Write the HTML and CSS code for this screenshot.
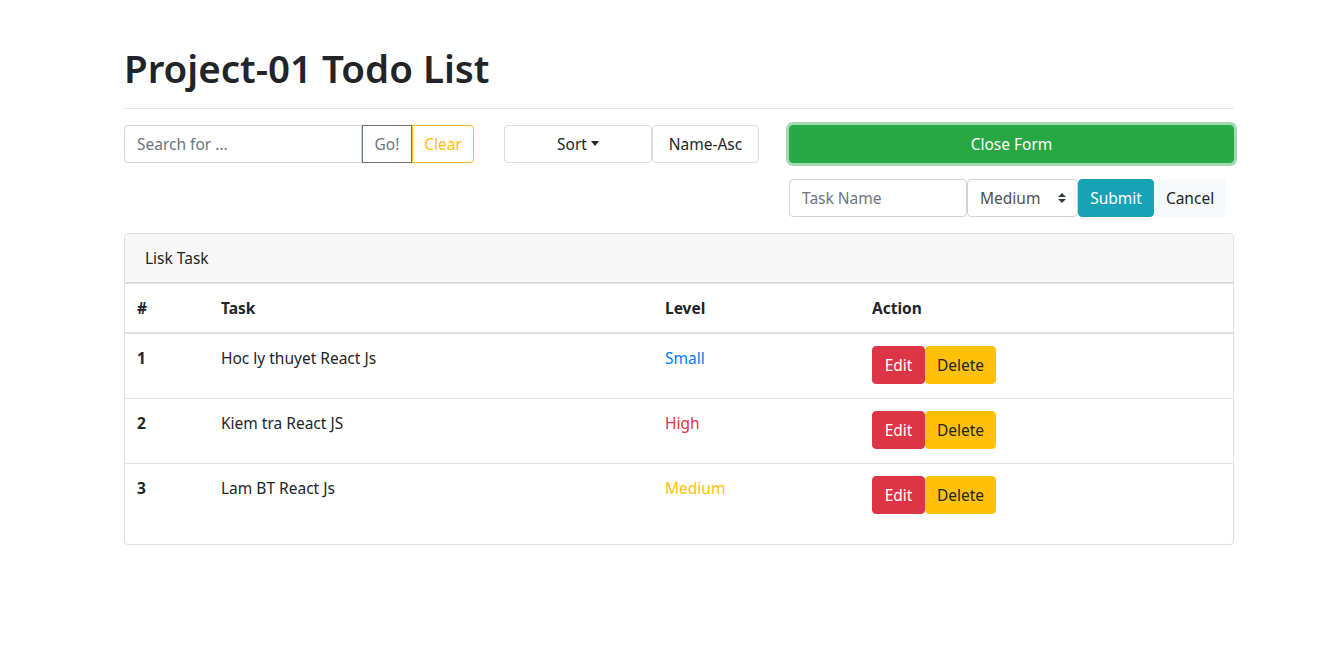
FILE: index.html
```html
<!DOCTYPE html>
<html lang="en">
<head>
<meta charset="utf-8">
<title>Project-01 Todo List</title>
<link rel="stylesheet" href="styles.css">
</head>
<body>
<div class="container">
  <div class="page-header">
    <h1 class="title">Project-01 Todo List</h1>
  </div>

  <div class="toolbar">
    <div class="search-group">
      <input class="search-input" type="text" placeholder="Search for ...">
      <button class="btn btn-outline-secondary btn-go">Go!</button>
      <button class="btn btn-outline-warning btn-clear">Clear</button>
    </div>

    <div class="sort-group">
      <button class="btn btn-outline-light btn-sort">Sort<span class="caret"></span></button>
      <span class="btn btn-outline-light btn-sort-label">Name-Asc</span>
    </div>

    <div class="form-col">
      <button class="btn btn-success btn-close-form">Close Form</button>
      <form class="task-form">
        <input class="task-input" type="text" placeholder="Task Name">
        <div class="select-wrap">
          <select class="level-select">
            <option>Small</option>
            <option selected>Medium</option>
            <option>High</option>
          </select>
          <svg class="select-arrows" width="8" height="10" viewBox="0 0 4 5"><path d="M2 0L0 2h4zm0 5L0 3h4z" fill="#343a40"/></svg>
        </div>
        <button type="button" class="btn btn-info btn-submit">Submit</button>
        <button type="button" class="btn btn-light btn-cancel">Cancel</button>
      </form>
    </div>
  </div>

  <div class="card">
    <div class="card-header">Lisk Task</div>
    <table class="task-table">
      <colgroup>
        <col class="c-num"><col class="c-task"><col class="c-level"><col class="c-action">
      </colgroup>
      <thead>
        <tr><th>#</th><th>Task</th><th>Level</th><th>Action</th></tr>
      </thead>
      <tbody>
        <tr>
          <td class="num">1</td>
          <td>Hoc ly thuyet React Js</td>
          <td class="lvl-small">Small</td>
          <td><div class="actions"><button class="btn btn-danger btn-edit">Edit</button><button class="btn btn-warning btn-delete">Delete</button></div></td>
        </tr>
        <tr>
          <td class="num">2</td>
          <td>Kiem tra React JS</td>
          <td class="lvl-high">High</td>
          <td><div class="actions"><button class="btn btn-danger btn-edit">Edit</button><button class="btn btn-warning btn-delete">Delete</button></div></td>
        </tr>
        <tr>
          <td class="num">3</td>
          <td>Lam BT React Js</td>
          <td class="lvl-medium">Medium</td>
          <td><div class="actions"><button class="btn btn-danger btn-edit">Edit</button><button class="btn btn-warning btn-delete">Delete</button></div></td>
        </tr>
      </tbody>
    </table>
  </div>
</div>
</body>
</html>
```
FILE: styles.css
```css
* { box-sizing: border-box; }

body {
  margin: 0;
  background: #fff;
  color: #212529;
  font-family: "Segoe UI", "Noto Sans", "Open Sans", sans-serif;
  font-size: 15.5px;
  line-height: 24px;
}

.container {
  width: 1110px;
  margin-left: 124px;
  padding-top: 44px;
}

.page-header {
  border-bottom: 1px solid #e5e5e5;
  padding-bottom: 16px;
  margin-bottom: 16px;
}

.title {
  margin: 0;
  font-size: 38.5px;
  line-height: 48px;
  font-weight: 600;
  color: #212529;
}

.toolbar {
  display: grid;
  grid-template-columns: 350px 255px 445px;
  column-gap: 30px;
  align-items: start;
  margin-bottom: 16px;
}

.btn {
  display: inline-flex;
  align-items: center;
  justify-content: center;
  height: 38px;
  padding: 0 12px;
  font-family: inherit;
  font-size: 15.5px;
  line-height: 24px;
  border: 1px solid transparent;
  border-radius: 4px;
  background: transparent;
  color: #212529;
  cursor: pointer;
}

/* search */
.search-group {
  display: flex;
  height: 38px;
}
.search-input {
  width: 238px;
  height: 38px;
  padding: 0 12px;
  font-family: inherit;
  font-size: 15.5px;
  color: #495057;
  border: 1px solid #ced4da;
  border-radius: 4px 0 0 4px;
  outline: none;
}
.search-input::placeholder, .task-input::placeholder { color: #6c757d; }

.btn-outline-secondary {
  color: #6c757d;
  border-color: #6c757d;
}
.btn-go {
  width: 50px;
  border-radius: 0;
}
.btn-outline-warning {
  color: #ffc107;
  border-color: #ffc107;
}
.btn-clear {
  width: 62px;
  border-radius: 0 4px 4px 0;
}

/* sort */
.sort-group {
  display: flex;
}
.btn-outline-light {
  border-color: #dadee2;
  background: #fff;
  color: #212529;
}
.btn-sort { width: 148px; }
.btn-sort-label { width: 107px; }
.caret {
  display: inline-block;
  margin-left: 4px;
  margin-top: -2px;
  border-top: 5px solid #212529;
  border-left: 4.5px solid transparent;
  border-right: 4.5px solid transparent;
}

/* form */
.btn-success {
  width: 100%;
  background: #28a745;
  border-color: #28a745;
  color: #fff;
  box-shadow: 0 0 0 3px rgba(72, 180, 97, 0.5);
}
.task-form {
  display: flex;
  margin-top: 16px;
  height: 38px;
}
.task-input {
  width: 178px;
  height: 38px;
  padding: 0 12px;
  font-family: inherit;
  font-size: 15.5px;
  color: #495057;
  border: 1px solid #ced4da;
  border-radius: 4px;
  outline: none;
}
.select-wrap {
  position: relative;
  width: 111px;
  height: 38px;
}
.level-select {
  width: 100%;
  height: 100%;
  padding: 0 28px 0 12px;
  font-family: inherit;
  font-size: 15.5px;
  color: #495057;
  background: #fff;
  border: 1px solid #ced4da;
  border-radius: 4px;
  appearance: none;
  -webkit-appearance: none;
  outline: none;
}
.select-arrows {
  position: absolute;
  right: 12px;
  top: 14px;
  pointer-events: none;
}
.btn-info {
  background: #17a2b8;
  border-color: #17a2b8;
  color: #fff;
}
.btn-submit { width: 76px; }
.btn-light {
  background: #f8f9fa;
  border-color: #f8f9fa;
  color: #212529;
}
.btn-cancel { width: 72px; }

/* card */
.card {
  border: 1px solid rgba(0, 0, 0, 0.125);
  border-radius: 4px;
  overflow: hidden;
}
.card-header {
  background: #f7f7f7;
  padding: 12px 20px;
  border-bottom: 1px solid rgba(0, 0, 0, 0.125);
}

.task-table {
  width: 100%;
  border-collapse: collapse;
  margin-bottom: 16px;
}
.c-num { width: 84px; }
.c-task { width: 444px; }
.c-level { width: 207px; }
.c-action { width: 373px; }

.task-table th {
  text-align: left;
  font-weight: 700;
  padding: 12px;
  border-top: 1px solid #dee2e6;
  border-bottom: 2px solid #dee2e6;
  vertical-align: bottom;
}
.task-table td {
  padding: 12px 12px 14px;
  border-top: 1px solid #dee2e6;
  vertical-align: top;
}
.task-table tbody tr:first-child td { border-top: 0; }
.task-table td.num { font-weight: 700; }

.lvl-small { color: #007bff; }
.lvl-high { color: #dc3545; }
.lvl-medium { color: #ffc107; }

.actions { display: flex; height: 38px; }
.btn-danger {
  background: #dc3545;
  border-color: #dc3545;
  color: #fff;
}
.btn-warning {
  background: #ffc107;
  border-color: #ffc107;
  color: #212529;
}
.btn-edit { width: 53px; }
.btn-delete { width: 71px; }
```
